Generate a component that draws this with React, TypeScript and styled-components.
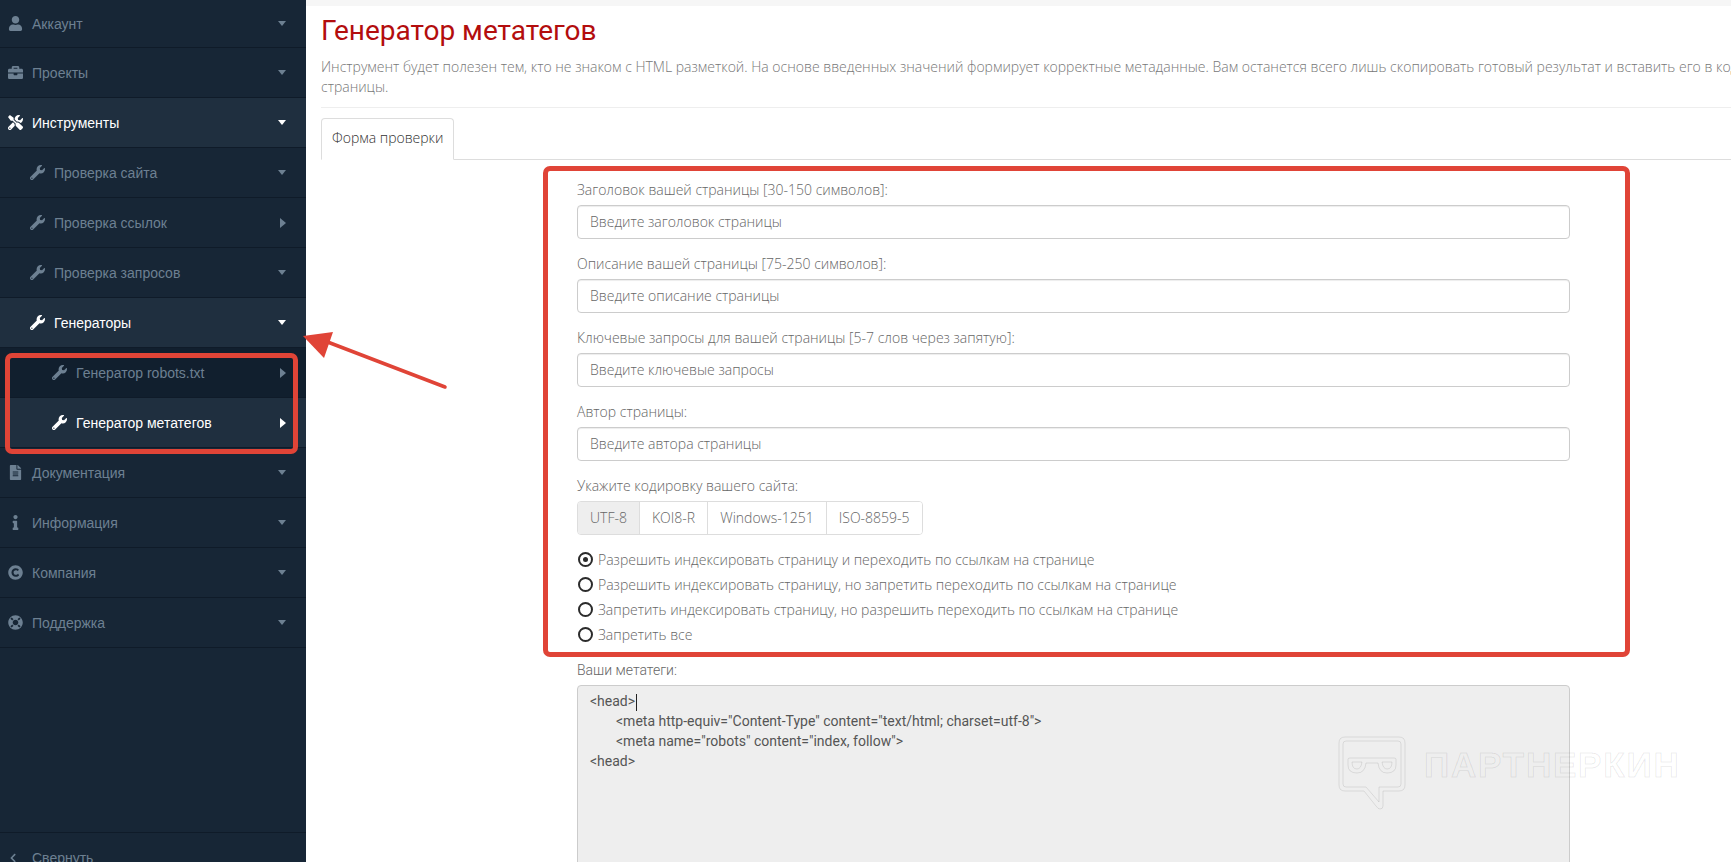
import React from 'react'
import styled, { createGlobalStyle } from 'styled-components'
import { FaBriefcase, FaChevronLeft, FaCopyright, FaFileAlt, FaInfo, FaLifeRing, FaTools, FaUser, FaWrench } from 'react-icons/fa'

const GlobalStyle = createGlobalStyle`
    html, body {
        margin: 0;
        height: 100%;
        overflow: hidden;
        background: #fff;
    }
    * {
        box-sizing: border-box;
    }
`

type MenuItem = {
    label: string
    icon: React.ReactNode
    level: number
    active?: boolean
    dark?: boolean
    caret?: 'down' | 'right'
}

const menu: MenuItem[] = [
    { label: 'Аккаунт', icon: <FaUser />, level: 0 },
    { label: 'Проекты', icon: <FaBriefcase />, level: 0 },
    { label: 'Инструменты', icon: <FaTools />, level: 0, active: true },
    { label: 'Проверка сайта', icon: <FaWrench />, level: 1 },
    { label: 'Проверка ссылок', icon: <FaWrench />, level: 1, caret: 'right' },
    { label: 'Проверка запросов', icon: <FaWrench />, level: 1 },
    { label: 'Генераторы', icon: <FaWrench />, level: 1, active: true },
    { label: 'Генератор robots.txt', icon: <FaWrench />, level: 2, caret: 'right', dark: true },
    { label: 'Генератор метатегов', icon: <FaWrench />, level: 2, caret: 'right', active: true },
    { label: 'Документация', icon: <FaFileAlt />, level: 0 },
    { label: 'Информация', icon: <FaInfo />, level: 0 },
    { label: 'Компания', icon: <FaCopyright />, level: 0 },
    { label: 'Поддержка', icon: <FaLifeRing />, level: 0 },
]

const fields = [
    { label: 'Заголовок вашей страницы [30-150 символов]:', placeholder: 'Введите заголовок страницы' },
    { label: 'Описание вашей страницы [75-250 символов]:', placeholder: 'Введите описание страницы' },
    { label: 'Ключевые запросы для вашей страницы [5-7 слов через запятую]:', placeholder: 'Введите ключевые запросы' },
    { label: 'Автор страницы:', placeholder: 'Введите автора страницы' },
]

const encodings = ['UTF-8', 'KOI8-R', 'Windows-1251', 'ISO-8859-5']

const robots = [
    'Разрешить индексировать страницу и переходить по ссылкам на странице',
    'Разрешить индексировать страницу, но запретить переходить по ссылкам на странице',
    'Запретить индексировать страницу, но разрешить переходить по ссылкам на странице',
    'Запретить все',
]

const App: React.FC = () => {
    return (
        <Page>
            <GlobalStyle />
            <Sidebar>
                <Menu>
                    {menu.map((m) => (
                        <MenuRow key={m.label} $active={m.active} $dark={m.dark} $level={m.level}>
                            <MenuIcon>{m.icon}</MenuIcon>
                            <MenuLabel>{m.label}</MenuLabel>
                            <Caret $dir={m.caret ?? 'down'} />
                        </MenuRow>
                    ))}
                </Menu>
                <Collapse>
                    <MenuIcon><FaChevronLeft size={10} /></MenuIcon>
                    <MenuLabel>Свернуть</MenuLabel>
                </Collapse>
            </Sidebar>
            <Main>
                <TopBand />
                <Content>
                    <Title>Генератор метатегов</Title>
                    <Description>
                        Инструмент будет полезен тем, кто не знаком с HTML разметкой. На основе введенных значений формирует корректные метаданные. Вам останется всего лишь скопировать готовый результат и вставить его в код страницы.
                    </Description>
                    <Tabs>
                        <Tab>Форма проверки</Tab>
                    </Tabs>
                    <Form>
                        {fields.map((f) => (
                            <Group key={f.label}>
                                <Label>{f.label}</Label>
                                <Input placeholder={f.placeholder} />
                            </Group>
                        ))}
                        <Label>Укажите кодировку вашего сайта:</Label>
                        <ButtonGroup>
                            {encodings.map((e, index) => (
                                <Encoding key={e} $selected={index === 0}>{e}</Encoding>
                            ))}
                        </ButtonGroup>
                        <Radios>
                            {robots.map((r, index) => (
                                <RadioRow key={r}>
                                    <Radio $checked={index === 0} />
                                    {r}
                                </RadioRow>
                            ))}
                        </Radios>
                        <ResultLabel>Ваши метатеги:</ResultLabel>
                        <Result>
                            <div>&lt;head&gt;<TextCaret /></div>
                            <Indented>&lt;meta http-equiv="Content-Type" content="text/html; charset=utf-8"&gt;</Indented>
                            <Indented>&lt;meta name="robots" content="index, follow"&gt;</Indented>
                            <div>&lt;head&gt;</div>
                        </Result>
                    </Form>
                </Content>
            </Main>

            <MenuHighlight />
            <FormHighlight />
            <Arrow viewBox="0 0 150 60" fill="none">
                <path d="M142 55 L22 9" stroke="#e04437" strokeWidth="3.5" strokeLinecap="round" />
                <path d="M0 4 L30 0 L21 26 Z" fill="#e04437" />
            </Arrow>
            <Watermark>
                <WatermarkLogo viewBox="0 0 68 74" fill="none" stroke="#000" strokeOpacity="0.09">
                    <path d="M7 1 H61 Q67 1 67 7 V49 Q67 55 61 55 H45 V70 Q45 73 42 73 Q40 73 38 70 L26 55 H7 Q1 55 1 49 V7 Q1 1 7 1 Z" />
                    <path d="M8 5 H60 Q63 5 63 8 V48 Q63 51 60 51 H41 V66 L28 51 H8 Q5 51 5 48 V8 Q5 5 8 5 Z" />
                    <path d="M10 23 Q10 22 12 22 H56 Q58 22 58 23 V29 Q58 37 49 37 Q41 37 40 27 H28 Q27 37 19 37 Q10 37 10 29 Z" />
                    <path d="M14 26 H24 Q23 33 19 33 Q14 33 14 26 Z" />
                    <path d="M44 26 H54 Q54 33 49 33 Q45 33 44 26 Z" />
                </WatermarkLogo>
                <WatermarkText>ПАРТНЕРКИН</WatermarkText>
            </Watermark>
        </Page>
    )
}

const Page = styled.div`
    position: relative;
    display: flex;
    width: 1731px;
    height: 862px;
    overflow: hidden;
`

const Sidebar = styled.aside`
    flex: 0 0 306px;
    height: 862px;
    overflow: hidden;
    background-color: #172636;
    font-family: 'Liberation Sans', Arial, sans-serif;
    font-size: 14px;
`

const Menu = styled.nav`
    height: 832px;
`

const MenuRow = styled.div<{ $active?: boolean; $dark?: boolean; $level: number }>`
    display: flex;
    align-items: center;
    height: 50px;
    padding-left: ${(p) => 8 + p.$level * 22}px;
    border-bottom: 1px solid #0f1b29;
    background-color: ${(p) => (p.$active ? '#1f2f3f' : p.$dark ? '#111f2e' : 'transparent')};
    color: ${(p) => (p.$active ? '#fff' : '#6d8092')};

    &:first-child {
        height: 48px;
    }
`

const MenuIcon = styled.span`
    display: flex;
    align-items: center;
    flex: 0 0 24px;
    font-size: 15px;
`

const MenuLabel = styled.span`
    flex: 1;
`

const Caret = styled.span<{ $dir: 'down' | 'right' }>`
    width: 0;
    height: 0;
    margin-right: 20px;
    border-style: solid;
    border-color: transparent;
    ${(p) =>
        p.$dir === 'down'
            ? `border-width: 5px 4.5px 0; border-top-color: currentColor;`
            : `border-width: 5px 0 5px 6px; border-left-color: currentColor;`}
`

const Collapse = styled.div`
    display: flex;
    align-items: center;
    height: 50px;
    padding-left: 8px;
    border-top: 1px solid #0f1b29;
    color: #6d8092;
`

const Main = styled.main`
    flex: 1;
    min-width: 0;
    overflow: hidden;
`

const TopBand = styled.div`
    height: 6px;
    background-color: #f6f6f6;
`

const Content = styled.div`
    width: 1505px;
    margin-left: 15px;
    font-family: 'Open Sans', sans-serif;
    font-size: 14px;
    font-weight: 300;
    color: #666;
`

const Title = styled.h1`
    margin: 8px 0 9px;
    font-family: Roboto, sans-serif;
    font-size: 28px;
    font-weight: 400;
    line-height: 34px;
    color: #b30d0d;
`

const Description = styled.p`
    margin: 0;
    padding: 0 30px 10px 0;
    line-height: 20px;
    color: #777;
    border-bottom: 1px solid #eee;
`

const Tabs = styled.div`
    display: flex;
    margin-top: 10px;
    border-bottom: 1px solid #ddd;
`

const Tab = styled.div`
    height: 42px;
    margin-bottom: -1px;
    padding: 0 10px;
    line-height: 38px;
    color: #333;
    background-color: #fff;
    border: 1px solid #ddd;
    border-bottom-color: #fff;
    border-radius: 4px 4px 0 0;
`

const Form = styled.form`
    width: 993px;
    margin: 0 auto;
    padding-top: 20px;
`

const Group = styled.div`
    margin-bottom: 15px;
`

const Label = styled.label`
    display: block;
    height: 20px;
    margin-bottom: 5px;
    line-height: 20px;
`

const Input = styled.input`
    display: block;
    width: 100%;
    height: 34px;
    padding: 0 12px 2px;
    font-family: 'Open Sans', sans-serif;
    font-size: 14px;
    font-weight: 300;
    color: #555;
    background: #fff;
    border: 1px solid #ccc;
    border-radius: 4px;
    box-shadow: inset 0 1px 1px rgba(0, 0, 0, 0.075);
    outline: none;

    &::placeholder {
        color: #666;
        opacity: 1;
    }
`

const ButtonGroup = styled.div`
    display: inline-flex;
    height: 34px;
    border: 1px solid #ddd;
    border-radius: 4px;
    overflow: hidden;
`

const Encoding = styled.div<{ $selected?: boolean }>`
    padding: 0 12px;
    line-height: 32px;
    background-color: ${(p) => (p.$selected ? '#eee' : '#fff')};

    & + & {
        border-left: 1px solid #ddd;
    }
`

const Radios = styled.div`
    margin-top: 12px;
`

const RadioRow = styled.div`
    display: flex;
    align-items: center;
    gap: 5px;
    height: 25px;
    padding-left: 1px;
`

const Radio = styled.span<{ $checked?: boolean }>`
    position: relative;
    width: 15px;
    height: 15px;
    border: 2px solid #2b2b2b;
    border-radius: 50%;

    &::after {
        content: '';
        display: ${(p) => (p.$checked ? 'block' : 'none')};
        position: absolute;
        left: 3px;
        top: 3px;
        width: 5px;
        height: 5px;
        border-radius: 50%;
        background-color: #2b2b2b;
    }
`

const ResultLabel = styled(Label)`
    margin-top: 13px;
    font-family: Roboto, sans-serif;
    font-weight: 300;
`

const Result = styled.div`
    height: 320px;
    padding: 5px 12px;
    font-family: Roboto, sans-serif;
    font-size: 14px;
    font-weight: 400;
    line-height: 20px;
    color: #555;
    background-color: #eee;
    border: 1px solid #ccc;
    border-radius: 4px;
`

const Indented = styled.div`
    padding-left: 26px;
`

const TextCaret = styled.span`
    display: inline-block;
    width: 1px;
    height: 17px;
    margin-left: 1px;
    vertical-align: middle;
    background-color: #222;
`

const MenuHighlight = styled.div`
    position: absolute;
    left: 5px;
    top: 353px;
    width: 293px;
    height: 101px;
    border: 5px solid #e04437;
    border-radius: 7px;
`

const FormHighlight = styled.div`
    position: absolute;
    left: 543px;
    top: 166px;
    width: 1087px;
    height: 491px;
    border: 5px solid #e04437;
    border-radius: 7px;
`

const Arrow = styled.svg`
    position: absolute;
    left: 303px;
    top: 332px;
    width: 150px;
    height: 60px;
`

const Watermark = styled.div`
    position: absolute;
    left: 1338px;
    top: 736px;
    display: flex;
    gap: 18px;
`

const WatermarkLogo = styled.svg`
    width: 68px;
    height: 74px;
`

const WatermarkText = styled.div`
    margin-top: 9px;
    font-family: 'Liberation Sans', Arial, sans-serif;
    font-size: 35px;
    font-weight: 700;
    line-height: 40px;
    letter-spacing: 1.8px;
    color: transparent;
    -webkit-text-stroke: 1px rgba(0, 0, 0, 0.09);
`

export default App
